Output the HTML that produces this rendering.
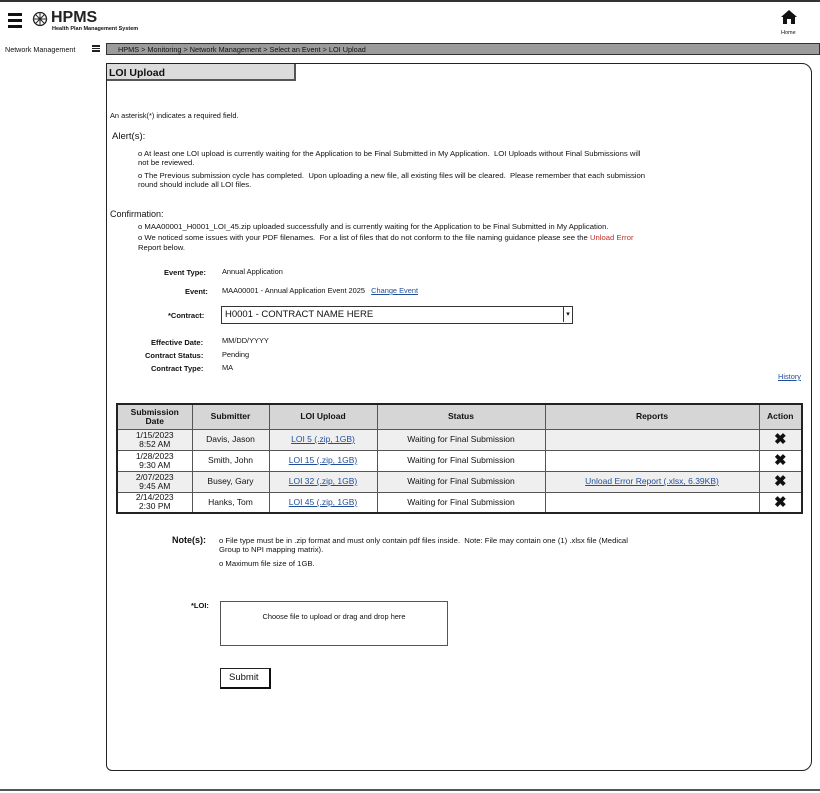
<!DOCTYPE html>
<html><head><meta charset="utf-8"><style>
*{margin:0;padding:0;box-sizing:border-box}
body{width:820px;height:793px;background:#fff;font-family:"Liberation Sans",sans-serif;color:#111;position:relative;overflow:hidden;font-size:7.5px}
.a{position:absolute;white-space:nowrap}
a,.lk{color:#1f4e9a;text-decoration:underline}
table{border-collapse:collapse;position:absolute;left:116px;top:403px;width:687px;border:2px solid #222}
td,th{border:1px solid #555;text-align:center;font-size:8.5px;line-height:9px;padding:0}
th{background:#d6d6d6;font-weight:bold;height:25px}
tr.r td{height:21px}
tr.g td{background:#efefef}
.x{font-size:15px;font-weight:bold}
.t{font-size:7.4px}
.w{font-size:7.7px}
</style></head><body>
<div class="a" style="left:0;top:0;width:820px;height:2px;background:#333"></div>
<div class="a" style="left:0;top:789px;width:820px;height:2px;background:#555"></div>
<div class="a" style="left:8px;top:13px;width:14px;height:3px;background:#111"></div>
<div class="a" style="left:8px;top:19px;width:14px;height:3px;background:#111"></div>
<div class="a" style="left:8px;top:25px;width:14px;height:3px;background:#111"></div>
<svg class="a" style="left:32px;top:11px" width="16" height="16" viewBox="0 0 16 16"><circle cx="8" cy="8" r="6.5" fill="none" stroke="#222" stroke-width="1.3"/><path d="M8 1.5V14.5M1.5 8H14.5M3.5 3.5L12.5 12.5M12.5 3.5L3.5 12.5" stroke="#222" stroke-width="1"/></svg>
<div class="a" style="left:51px;top:9px;font-size:16px;font-weight:bold;color:#222">HPMS</div>
<div class="a" style="left:52px;top:26px;font-size:5.5px;font-weight:bold">Health Plan Management System</div>
<svg class="a" style="left:781px;top:10px" width="16" height="14" viewBox="0 0 16 14"><path d="M8 0L0 7h2v7h4V9h4v5h4V7h2z" fill="#111"/></svg>
<div class="a" style="left:781px;top:30px;font-size:5.5px">Home</div>
<div class="a" style="left:5px;top:45px;font-size:7.2px">Network Management</div>
<div class="a" style="left:92px;top:45px;width:8px;height:7px;border-top:2px solid #222;border-bottom:2px solid #222"><div style="margin-top:1px;height:1px;background:#222"></div></div>
<div class="a" style="left:106px;top:43px;width:714px;height:12px;background:#9b9b9b;border:1px solid #333;font-size:7.3px;padding:1px 0 0 11px">HPMS &gt; Monitoring &gt; Network Management &gt; Select an Event &gt; LOI Upload</div>
<div class="a" style="left:106px;top:63px;width:706px;height:708px;border:1.5px solid #222;border-radius:0 10px 10px 6px"></div>
<div class="a" style="left:107px;top:64px;width:189px;height:17px;background:#dcdcdc;border-right:2px solid #555;border-bottom:2px solid #555;font-size:10.5px;font-weight:bold;padding:3px 0 0 2px">LOI Upload</div>
<div class="a t" style="left:110px;top:111px">An asterisk(*) indicates a required field.</div>
<div class="a" style="left:112px;top:131px;font-size:9.5px">Alert(s):</div>
<div class="a w" style="left:138px;top:149px;line-height:9px">o At least one LOI upload is currently waiting for the Application to be Final Submitted in My Application.&nbsp; LOI Uploads without Final Submissions will<br>not be reviewed.</div>
<div class="a w" style="left:138px;top:171px;line-height:9px">o The Previous submission cycle has completed.&nbsp; Upon uploading a new file, all existing files will be cleared.&nbsp; Please remember that each submission<br>round should include all LOI files.</div>
<div class="a" style="left:110px;top:209px;font-size:9px">Confirmation:</div>
<div class="a w" style="left:138px;top:222px">o MAA00001_H0001_LOI_45.zip uploaded successfully and is currently waiting for the Application to be Final Submitted in My Application.</div>
<div class="a w" style="left:138px;top:233px;line-height:10px">o We noticed some issues with your PDF filenames.&nbsp; For a list of files that do not conform to the file naming guidance please see the <span style="color:#c0302a">Unload Error</span><br>Report below.</div>
<div class="a" style="left:164px;top:268px;font-size:7.5px;font-weight:bold">Event Type:</div>
<div class="a t" style="left:222px;top:267px">Annual Application</div>
<div class="a" style="left:185px;top:287px;font-size:7.5px;font-weight:bold">Event:</div>
<div class="a t" style="left:222px;top:286px">MAA00001 - Annual Application Event 2025 &nbsp;&nbsp;<span class="lk">Change Event</span></div>
<div class="a" style="left:168px;top:311px;font-size:7.5px;font-weight:bold">*Contract:</div>
<div class="a" style="left:221px;top:306px;width:352px;height:18px;border:1.5px solid #333;font-size:9.5px;padding:2px 0 0 3px">H0001 - CONTRACT NAME HERE<div style="position:absolute;right:0;top:0;width:9px;height:15px;border-left:1px solid #333;font-size:7px;text-align:center;line-height:15px">▾</div></div>
<div class="a" style="left:151px;top:338px;font-size:7.5px;font-weight:bold">Effective Date:</div>
<div class="a t" style="left:222px;top:336px">MM/DD/YYYY</div>
<div class="a" style="left:145px;top:351px;font-size:7.5px;font-weight:bold">Contract Status:</div>
<div class="a t" style="left:222px;top:350px">Pending</div>
<div class="a" style="left:151px;top:364px;font-size:7.5px;font-weight:bold">Contract Type:</div>
<div class="a t" style="left:222px;top:363px">MA</div>
<div class="a lk t" style="left:778px;top:372px">History</div>
<table>
<tr><th style="width:75px">Submission<br>Date</th><th style="width:77px">Submitter</th><th style="width:108px">LOI Upload</th><th style="width:168px">Status</th><th style="width:214px">Reports</th><th>Action</th></tr>
<tr class="r g"><td>1/15/2023<br>8:52 AM</td><td>Davis, Jason</td><td><a>LOI 5 (.zip, 1GB)</a></td><td>Waiting for Final Submission</td><td></td><td class="x">✖</td></tr>
<tr class="r"><td>1/28/2023<br>9:30 AM</td><td>Smith, John</td><td><a>LOI 15 (.zip, 1GB)</a></td><td>Waiting for Final Submission</td><td></td><td class="x">✖</td></tr>
<tr class="r g"><td>2/07/2023<br>9:45 AM</td><td>Busey, Gary</td><td><a>LOI 32 (.zip, 1GB)</a></td><td>Waiting for Final Submission</td><td><a>Unload Error Report (.xlsx, 6.39KB)</a></td><td class="x">✖</td></tr>
<tr class="r"><td>2/14/2023<br>2:30 PM</td><td>Hanks, Tom</td><td><a>LOI 45 (.zip, 1GB)</a></td><td>Waiting for Final Submission</td><td></td><td class="x">✖</td></tr>
</table>
<div class="a" style="left:172px;top:535px;font-size:9px;font-weight:bold">Note(s):</div>
<div class="a w" style="left:219px;top:536px;line-height:9px">o File type must be in .zip format and must only contain pdf files inside.&nbsp; Note: File may contain one (1) .xlsx file (Medical<br>Group to NPI mapping matrix).</div>
<div class="a w" style="left:219px;top:559px">o Maximum file size of 1GB.</div>
<div class="a" style="left:191px;top:601px;font-size:7.5px;font-weight:bold">*LOI:</div>
<div class="a t" style="left:220px;top:601px;width:228px;height:45px;border:1px solid #555;text-align:center;padding-top:10px">Choose file to upload or drag and drop here</div>
<div class="a" style="left:220px;top:668px;width:51px;height:21px;border:1px solid #222;border-right:2.5px solid #111;border-bottom:2.5px solid #111;font-size:9.5px;padding:3px 0 0 8px">Submit</div>
</body></html>
